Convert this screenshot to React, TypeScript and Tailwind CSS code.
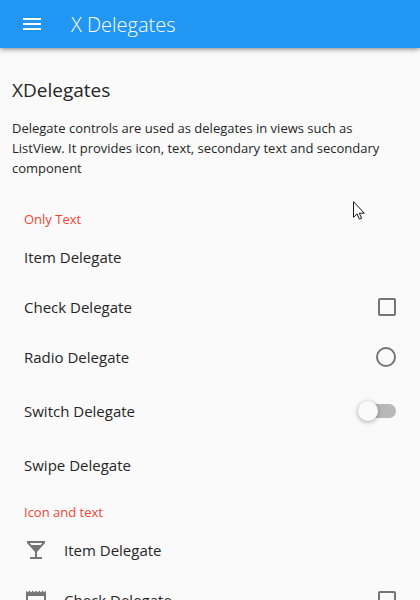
import type { ReactNode } from "react";

function MenuIcon() {
  return (
    <svg viewBox="0 0 24 24" className="size-6 fill-current" aria-hidden="true">
      <path d="M3 18h18v-2H3v2zm0-5h18v-2H3v2zm0-7v2h18V6H3z" />
    </svg>
  );
}

function BarIcon() {
  return (
    <svg viewBox="0 0 24 24" className="size-6 fill-[#757575]" aria-hidden="true">
      <path d="M21 5V3H3v2l8 9v5H6v2h12v-2h-5v-5l8-9zM7.43 7L5.66 5h12.69l-1.78 2H7.43z" />
    </svg>
  );
}

function ReceiptIcon() {
  return (
    <svg viewBox="0 0 24 24" className="size-6 fill-[#757575]" aria-hidden="true">
      <path
        fillRule="evenodd"
        d="M2 2.6l1.67 2L5.33 2.6 7 4.6l1.67-2 1.66 2L12 2.6l1.67 2 1.66-2L17 4.6l1.67-2 1.66 2L22 2.6V21l-1.67-2-1.66 2L17 19l-1.67 2-1.66-2L12 21l-1.67-2-1.66 2L7 19l-1.67 2-1.66-2L2 21zM4 8v9h16V8z"
      />
    </svg>
  );
}

function SectionTitle({ children }: { children: ReactNode }) {
  return (
    <h3 className="px-3 pt-3 pb-[3px] text-[13px] leading-5 text-[#f44336]">{children}</h3>
  );
}

const rowClass =
  "flex min-h-[50px] w-full items-center gap-4 px-3 text-left text-[15px] leading-6";

function ButtonRow({ icon, text }: { icon?: ReactNode; text: string }) {
  return (
    <button type="button" className={rowClass}>
      {icon}
      <span>{text}</span>
    </button>
  );
}

function CheckRow({ icon, text }: { icon?: ReactNode; text: string }) {
  return (
    <label className={rowClass}>
      {icon}
      <span className="flex-1">{text}</span>
      <input
        type="checkbox"
        className="size-[18px] appearance-none rounded-xs border-2 border-[#757575] checked:bg-[#757575]"
      />
    </label>
  );
}

function RadioRow({ icon, text, name }: { icon?: ReactNode; text: string; name: string }) {
  return (
    <label className={rowClass}>
      {icon}
      <span className="flex-1">{text}</span>
      <input
        type="radio"
        name={name}
        className="size-5 appearance-none rounded-full border-2 border-[#757575] checked:bg-[#757575]"
      />
    </label>
  );
}

function SwitchRow({ icon, text }: { icon?: ReactNode; text: string }) {
  return (
    <label className={`${rowClass} py-[17px]`}>
      {icon}
      <span className="flex-1">{text}</span>
      <input
        type="checkbox"
        role="switch"
        className="flex h-[14px] w-9 appearance-none items-center rounded-full bg-[#b8b8b8] before:-ml-[2px] before:size-5 before:rounded-full before:bg-[#fafafa] before:shadow-[0_1px_5px_rgba(0,0,0,0.35)] before:content-[''] checked:before:ml-[18px]"
      />
    </label>
  );
}

function Pointer() {
  return (
    <svg
      viewBox="0 0 12 19"
      className="pointer-events-none absolute top-[201px] left-[353px] h-[19px] w-3"
      aria-hidden="true"
    >
      <path
        d="M.5 .7v15.6l3.6-3.4 2.3 5.3 2.2-1-2.3-5h5z"
        fill="#fff"
        stroke="#14141f"
        strokeWidth="1"
      />
    </svg>
  );
}

export default function App() {
  return (
    <div className="relative flex h-screen flex-col overflow-hidden bg-[#fafafa] font-['Open_Sans','Noto_Sans',sans-serif] text-[#262626]">
      <header className="z-10 flex h-12 shrink-0 items-center gap-[27px] bg-[#2196f3] px-5 text-white shadow-[0_1px_5px_rgba(0,0,0,0.5)]">
        <button type="button" aria-label="Menu">
          <MenuIcon />
        </button>
        <h1 className="pt-0.5 text-[20px] leading-7 font-light">X Delegates</h1>
      </header>
      <main className="flex-1 overflow-y-auto px-3 pt-7 [scrollbar-width:none]">
        <h2 className="text-[19px] leading-7">XDelegates</h2>
        <p className="mt-[14px] mb-[19px] text-[13px] leading-5">
          Delegate controls are used as delegates in views such as ListView. It provides icon,
          text, secondary text and secondary component
        </p>
        <section>
          <SectionTitle>Only Text</SectionTitle>
          <ButtonRow text="Item Delegate" />
          <CheckRow text="Check Delegate" />
          <RadioRow text="Radio Delegate" name="text-radio" />
          <SwitchRow text="Switch Delegate" />
          <ButtonRow text="Swipe Delegate" />
        </section>
        <section>
          <SectionTitle>Icon and text</SectionTitle>
          <ButtonRow icon={<BarIcon />} text="Item Delegate" />
          <CheckRow icon={<ReceiptIcon />} text="Check Delegate" />
        </section>
      </main>
      <Pointer />
    </div>
  );
}
